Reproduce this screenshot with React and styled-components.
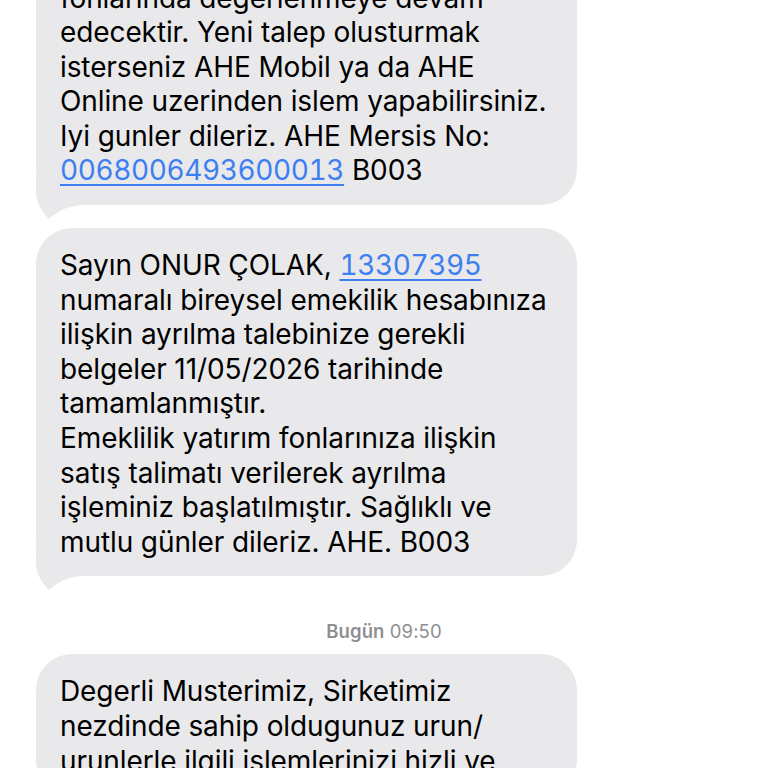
import React from "react";
import styled, { createGlobalStyle } from "styled-components";

const Global = createGlobalStyle`
  html, body { margin: 0; padding: 0; background: #ffffff; }
  body { overflow: hidden; }
  #root { height: 768px; overflow: hidden; }
`;

const Screen = styled.div`
  width: 768px;
  height: 768px;
  overflow: hidden;
  background: #ffffff;
  font-family: Inter, "Noto Sans", "Liberation Sans", sans-serif;
`;

const Thread = styled.div`
  display: flex;
  flex-direction: column;
  align-items: flex-start;
  margin-top: -40px;
  padding-left: 36px;
`;

const Bubble = styled.div`
  position: relative;
  box-sizing: border-box;
  width: 541px;
  padding: 20.5px 20px 16.5px 24px;
  margin-top: ${(p) => p.$gap || 0}px;
  background: #e9e9eb;
  border-radius: 36px;
  color: #000000;
  font-size: 28px;
  line-height: 34.6px;
  letter-spacing: -0.1px;
`;

const Line = styled.div`
  position: relative;
  z-index: 1;
  white-space: nowrap;
`;

const Link = styled.span`
  color: #3d7ff0;
  font-feature-settings: "tnum" 1;
  letter-spacing: -0.4px;
  text-decoration: underline;
  text-decoration-thickness: 1.5px;
  text-underline-offset: 4px;
`;

const TailSvg = styled.svg`
  position: absolute;
  z-index: 0;
  left: 0;
  bottom: -14px;
  width: 44px;
  height: 44px;
  overflow: visible;
`;

const Stamp = styled.div`
  align-self: stretch;
  margin: 44px 0 12px -36px;
  text-align: center;
  font-size: 18.5px;
  line-height: 22px;
  color: #8e8e93;
  letter-spacing: 0.1px;
`;

const StampDay = styled.span`
  font-weight: 600;
`;

const Tail = () => (
  <TailSvg viewBox="0 0 44 44" aria-hidden="true">
    <path
      d="M0 0 L0 16 C0 27 5 36 13 44 C20 38 28 32 44 30 L44 0 Z"
      fill="#e9e9eb"
    />
  </TailSvg>
);

export default function App() {
  return (
    <Screen>
      <Global />
      <Thread>
        <Bubble>
          <Line>fonlarinda degerlenmeye devam</Line>
          <Line>edecektir. Yeni talep olusturmak</Line>
          <Line>isterseniz AHE Mobil ya da AHE</Line>
          <Line>Online uzerinden islem yapabilirsiniz.</Line>
          <Line>Iyi gunler dileriz. AHE Mersis No:</Line>
          <Line>
            <Link>0068006493600013</Link> B003
          </Line>
          <Tail />
        </Bubble>
        <Bubble $gap={23}>
          <Line>
            Sayın ONUR ÇOLAK, <Link>13307395</Link>
          </Line>
          <Line>numaralı bireysel emekilik hesabınıza</Line>
          <Line>ilişkin ayrılma talebinize gerekli</Line>
          <Line>belgeler 11/05/2026 tarihinde</Line>
          <Line>tamamlanmıştır.</Line>
          <Line>Emeklilik yatırım fonlarınıza ilişkin</Line>
          <Line>satış talimatı verilerek ayrılma</Line>
          <Line>işleminiz başlatılmıştır. Sağlıklı ve</Line>
          <Line>mutlu günler dileriz. AHE. B003</Line>
          <Tail />
        </Bubble>
        <Stamp>
          <StampDay>Bugün</StampDay> 09:50
        </Stamp>
        <Bubble>
          <Line>Degerli Musterimiz, Sirketimiz</Line>
          <Line>nezdinde sahip oldugunuz urun/</Line>
          <Line>urunlerle ilgili islemlerinizi hizli ve</Line>
        </Bubble>
      </Thread>
    </Screen>
  );
}
